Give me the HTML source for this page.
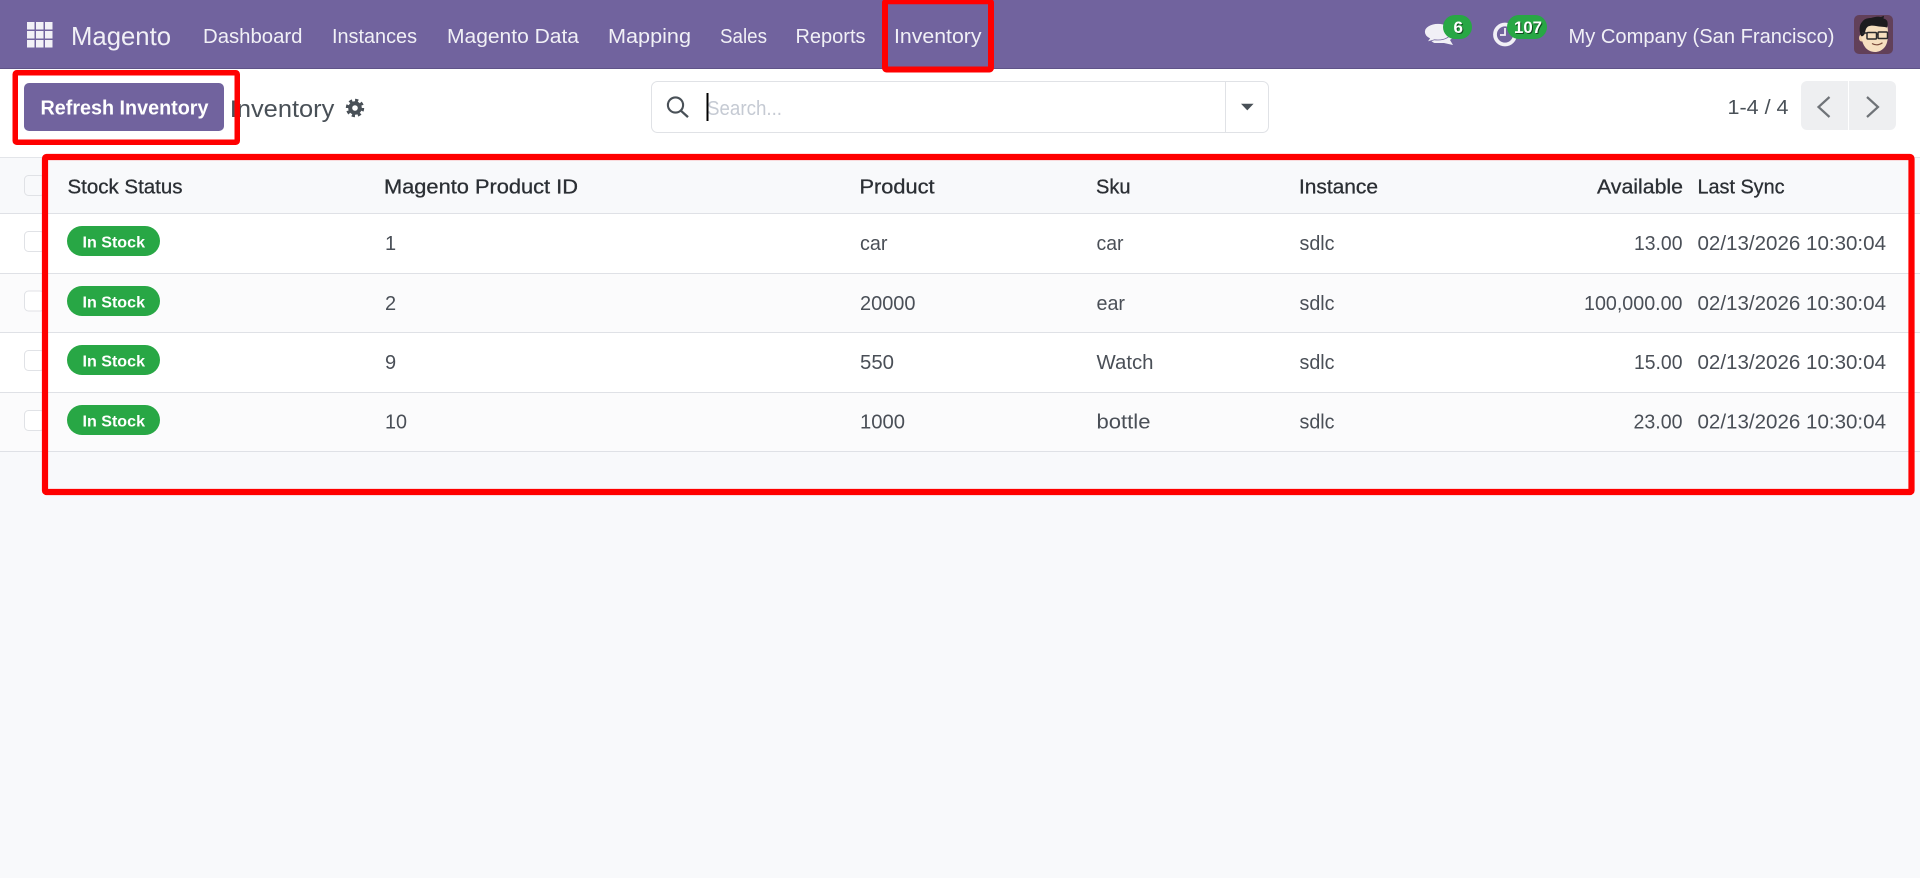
<!DOCTYPE html>
<html lang="en"><head><meta charset="utf-8"><title>Inventory</title>
<style>
html,body{margin:0;padding:0;background:#f8f9fb;overflow:hidden}
svg{display:block}
text{font-family:"Liberation Sans",Arial,sans-serif;white-space:pre}
.n{font-size:20px;fill:#f1f0f6}
.h{font-size:20px;fill:#2b2f34;stroke:#2b2f34;stroke-width:.3}
.b{font-size:20px;fill:#4a4f57}
.s{font-size:16px;font-weight:700;fill:#fff}
.t{font-size:17px;font-weight:700;fill:#fff;filter:drop-shadow(1px 1px 0 rgba(0,0,0,.55))}
</style></head><body>
<svg xmlns="http://www.w3.org/2000/svg" width="1920" height="878" viewBox="0 0 1920 878">
<rect width="1920" height="878" fill="#f8f9fb"/>
<!-- navbar -->
<rect width="1920" height="68" fill="#71639e"/>
<rect y="68" width="1920" height="1" fill="#5f5388"/>
<g fill="#f1f0f6">
<rect x="27" y="22" width="7.500" height="7.500"/><rect x="36" y="22" width="7.500" height="7.500"/><rect x="45" y="22" width="7.500" height="7.500"/>
<rect x="27" y="31" width="7.500" height="7.500"/><rect x="36" y="31" width="7.500" height="7.500"/><rect x="45" y="31" width="7.500" height="7.500"/>
<rect x="27" y="40" width="7.500" height="7.500"/><rect x="36" y="40" width="7.500" height="7.500"/><rect x="45" y="40" width="7.500" height="7.500"/>
</g>
<text x="71" y="45" font-size="26" fill="#f1f0f6" textLength="100" lengthAdjust="spacingAndGlyphs">Magento</text>
<text class="n" x="203" y="43" textLength="99.500" lengthAdjust="spacingAndGlyphs">Dashboard</text>
<text class="n" x="332" y="43" textLength="85" lengthAdjust="spacingAndGlyphs">Instances</text>
<text class="n" x="447" y="43" textLength="132" lengthAdjust="spacingAndGlyphs">Magento Data</text>
<text class="n" x="608" y="43" textLength="83" lengthAdjust="spacingAndGlyphs">Mapping</text>
<text class="n" x="720" y="43" textLength="47" lengthAdjust="spacingAndGlyphs">Sales</text>
<text class="n" x="795.500" y="43" textLength="70" lengthAdjust="spacingAndGlyphs">Reports</text>
<text class="n" x="894" y="43" textLength="87.500" lengthAdjust="spacingAndGlyphs">Inventory</text>
<!-- comments icon -->
<path d="M1441 30.500c-6 0-11 3-11 7 0 2.500 2 4.500 4.500 5.500h9.500l9 2-3-5c1.500-1 2.500-2 2.500-3.500 0-4-5-6.500-11-6.500z" fill="#f1f0f6"/>
<path d="M1438 23.500c-7.500 0-13.500 3.700-13.500 8.300 0 2.900 2.200 5.400 5 6.700l-2.500 3.500 7.500-2.200c1.100.2 2.300.2 3.500.2 7.500 0 13.500-3.700 13.500-8.200s-6-8.300-13.500-8.300z" fill="#f1f0f6" stroke="#71639e" stroke-width=".8"/>
<rect x="1443" y="15" width="29" height="24" rx="12" fill="#28a745"/>
<text class="t" x="1453.500" y="33" textLength="9.500" lengthAdjust="spacingAndGlyphs">6</text>
<!-- clock icon -->
<circle cx="1505" cy="34.500" r="10" fill="none" stroke="#f1f0f6" stroke-width="3.800"/>
<path d="M1505 28v7h-5" fill="none" stroke="#f1f0f6" stroke-width="1.800"/>
<rect x="1507" y="15" width="40" height="24" rx="12" fill="#28a745"/>
<text class="t" x="1514" y="33" textLength="28" lengthAdjust="spacingAndGlyphs">107</text>
<text class="n" x="1568.500" y="43" textLength="266" lengthAdjust="spacingAndGlyphs">My Company (San Francisco)</text>
<!-- avatar -->
<rect x="1854" y="15" width="39" height="39" rx="5" fill="#624059"/>
<ellipse cx="1861.500" cy="38" rx="2.500" ry="3.500" fill="#f0d2ac"/>
<path d="M1861 30c0-5 3-9 8-10l14-1c4 3 5 8 5 14 0 7-1 12-4 15-3 3-6 4-9 4-4 0-8-2-10-5-3-4-4-10-4-17z" fill="#f6dfbf"/>
<path d="M1861 36c-2-5-2-11 1-14 2-3 5-4 9-4 3-1 7-2 10-1l3-1.200-.5 2.700c2 .5 3.500 1.500 4 3.500.3 2 .2 4-.5 5.500-3-1-7-.5-11-1.500-3-.7-6-.5-8 .5-2 1.500-2.500 3.500-3 6.500-.5 2-2.500 4-4 3z" fill="#1d1c1f"/>
<g fill="none" stroke="#2a2a2c" stroke-width="1.500">
<rect x="1867" y="32.500" width="9.500" height="6.500" rx="1"/><rect x="1878" y="32" width="9.500" height="6.500" rx="1"/><path d="M1876.500 34.500h1.500M1862 33h5"/>
</g>
<path d="M1872 43.500q5 3 10.500-.8" fill="none" stroke="#7a4a3a" stroke-width="1.200"/>
<!-- control panel -->
<rect y="69" width="1920" height="88" fill="#fff"/>
<rect y="157" width="1920" height="1" fill="#e3e5e9"/>
<rect x="24" y="83" width="200" height="48" rx="5" fill="#71639e"/>
<text x="40.500" y="114.500" font-size="20" font-weight="700" fill="#fff" textLength="168" lengthAdjust="spacingAndGlyphs">Refresh Inventory</text>
<text x="229.800" y="117" font-size="24" fill="#495057" textLength="104.500" lengthAdjust="spacingAndGlyphs">Inventory</text>
<circle cx="355" cy="108" r="6.800" fill="#495057"/>
<circle cx="355" cy="108" r="7.800" fill="none" stroke="#495057" stroke-width="2.800" stroke-dasharray="3.200 2.900"/>
<circle cx="355" cy="108" r="2.800" fill="#fff"/>
<!-- search -->
<rect x="651.500" y="81.500" width="617" height="51" rx="6" fill="#fff" stroke="#e0e2e6"/>
<rect x="1225" y="82" width="1" height="50" fill="#e0e2e6"/>
<circle cx="675.500" cy="105" r="7.600" fill="none" stroke="#495057" stroke-width="2.100"/>
<path d="M681 110.800l7 6.300" stroke="#495057" stroke-width="2.300" fill="none"/>
<text x="707" y="115" font-size="20" fill="#c5cad3" textLength="75" lengthAdjust="spacingAndGlyphs">Search...</text>
<rect x="706.500" y="93" width="2" height="28" fill="#000"/>
<path d="M1241 103.800h12.600l-6.300 6.600z" fill="#495057"/>
<!-- pager -->
<text x="1727.500" y="114" font-size="20" fill="#495057" textLength="61" lengthAdjust="spacingAndGlyphs">1-4 / 4</text>
<path d="M1807 81h41v49h-41a6 6 0 0 1-6-6v-37a6 6 0 0 1 6-6z" fill="#eeeff1"/>
<path d="M1849 81h41a6 6 0 0 1 6 6v37a6 6 0 0 1-6 6h-41z" fill="#eeeff1"/>
<path d="M1829.500 97l-11 10 11 10" fill="none" stroke="#6f7378" stroke-width="2.200"/>
<path d="M1867 97l11 10-11 10" fill="none" stroke="#6f7378" stroke-width="2.200"/>
<!-- table -->
<rect y="158" width="1920" height="55" fill="#f8f9fb"/>
<rect y="214" width="1920" height="59" fill="#fff"/>
<rect y="274" width="1920" height="58" fill="#fbfbfc"/>
<rect y="333" width="1920" height="59" fill="#fff"/>
<rect y="393" width="1920" height="58" fill="#fbfbfc"/>
<g fill="#dfe1e6">
<rect y="213" width="1920" height="1"/><rect y="273" width="1920" height="1"/><rect y="332" width="1920" height="1"/><rect y="392" width="1920" height="1"/><rect y="451" width="1920" height="1"/>
</g>
<g fill="#fff" stroke="#e0e2e6">
<rect x="24.500" y="175.500" width="20" height="20" rx="4" fill="#f8f9fb"/>
<rect x="24.500" y="231.500" width="20" height="20" rx="4"/>
<rect x="24.500" y="291" width="20" height="20" rx="4"/>
<rect x="24.500" y="350.500" width="20" height="20" rx="4"/>
<rect x="24.500" y="410.500" width="20" height="20" rx="4"/>
</g>
<text class="h" x="67.500" y="193.300" textLength="115" lengthAdjust="spacingAndGlyphs">Stock Status</text>
<text class="h" x="384" y="193.300" textLength="194" lengthAdjust="spacingAndGlyphs">Magento Product ID</text>
<text class="h" x="859.500" y="193.300" textLength="75" lengthAdjust="spacingAndGlyphs">Product</text>
<text class="h" x="1096" y="193.300" textLength="34.500" lengthAdjust="spacingAndGlyphs">Sku</text>
<text class="h" x="1299" y="193.300" textLength="79" lengthAdjust="spacingAndGlyphs">Instance</text>
<text class="h" x="1597" y="193.300" textLength="86" lengthAdjust="spacingAndGlyphs">Available</text>
<text class="h" x="1697.500" y="193.300" textLength="87" lengthAdjust="spacingAndGlyphs">Last Sync</text>
<!-- row 1 -->
<rect x="67" y="226" width="93" height="30" rx="15" fill="#28a745"/>
<text class="s" x="82.500" y="247.500" textLength="62.500" lengthAdjust="spacingAndGlyphs">In Stock</text>
<text class="b" x="385" y="250">1</text>
<text class="b" x="860" y="250" textLength="27.500" lengthAdjust="spacingAndGlyphs">car</text>
<text class="b" x="1096.500" y="250" textLength="27" lengthAdjust="spacingAndGlyphs">car</text>
<text class="b" x="1299.500" y="250" textLength="35" lengthAdjust="spacingAndGlyphs">sdlc</text>
<text class="b" x="1634" y="250" textLength="48.500" lengthAdjust="spacingAndGlyphs">13.00</text>
<text class="b" x="1697.500" y="250" textLength="188.500" lengthAdjust="spacingAndGlyphs">02/13/2026 10:30:04</text>
<!-- row 2 -->
<rect x="67" y="286" width="93" height="30" rx="15" fill="#28a745"/>
<text class="s" x="82.500" y="307.500" textLength="62.500" lengthAdjust="spacingAndGlyphs">In Stock</text>
<text class="b" x="385" y="310">2</text>
<text class="b" x="860" y="310" textLength="55.500" lengthAdjust="spacingAndGlyphs">20000</text>
<text class="b" x="1096.500" y="310" textLength="28.500" lengthAdjust="spacingAndGlyphs">ear</text>
<text class="b" x="1299.500" y="310" textLength="35" lengthAdjust="spacingAndGlyphs">sdlc</text>
<text class="b" x="1584" y="310" textLength="98.500" lengthAdjust="spacingAndGlyphs">100,000.00</text>
<text class="b" x="1697.500" y="310" textLength="188.500" lengthAdjust="spacingAndGlyphs">02/13/2026 10:30:04</text>
<!-- row 3 -->
<rect x="67" y="345" width="93" height="30" rx="15" fill="#28a745"/>
<text class="s" x="82.500" y="366.500" textLength="62.500" lengthAdjust="spacingAndGlyphs">In Stock</text>
<text class="b" x="385" y="369">9</text>
<text class="b" x="860" y="369" textLength="34" lengthAdjust="spacingAndGlyphs">550</text>
<text class="b" x="1096.500" y="369" textLength="57" lengthAdjust="spacingAndGlyphs">Watch</text>
<text class="b" x="1299.500" y="369" textLength="35" lengthAdjust="spacingAndGlyphs">sdlc</text>
<text class="b" x="1634" y="369" textLength="48.500" lengthAdjust="spacingAndGlyphs">15.00</text>
<text class="b" x="1697.500" y="369" textLength="188.500" lengthAdjust="spacingAndGlyphs">02/13/2026 10:30:04</text>
<!-- row 4 -->
<rect x="67" y="405" width="93" height="30" rx="15" fill="#28a745"/>
<text class="s" x="82.500" y="426.500" textLength="62.500" lengthAdjust="spacingAndGlyphs">In Stock</text>
<text class="b" x="385" y="428.500" textLength="22" lengthAdjust="spacingAndGlyphs">10</text>
<text class="b" x="860" y="428.500" textLength="45" lengthAdjust="spacingAndGlyphs">1000</text>
<text class="b" x="1096.500" y="428.500" textLength="54" lengthAdjust="spacingAndGlyphs">bottle</text>
<text class="b" x="1299.500" y="428.500" textLength="35" lengthAdjust="spacingAndGlyphs">sdlc</text>
<text class="b" x="1633.500" y="428.500" textLength="49" lengthAdjust="spacingAndGlyphs">23.00</text>
<text class="b" x="1697.500" y="428.500" textLength="188.500" lengthAdjust="spacingAndGlyphs">02/13/2026 10:30:04</text>
<!-- red annotation boxes -->
<g fill="none" stroke="#ff0000" stroke-linejoin="round">
<rect x="15.250" y="72.750" width="222" height="69.500" rx="1.500" stroke-width="5.500"/>
<rect x="885" y="1.200" width="106" height="68.300" rx="1.500" stroke-width="6"/>
<rect x="45" y="157" width="1866.500" height="335" rx="1.500" stroke-width="6.200"/>
</g>
</svg>
</body></html>
